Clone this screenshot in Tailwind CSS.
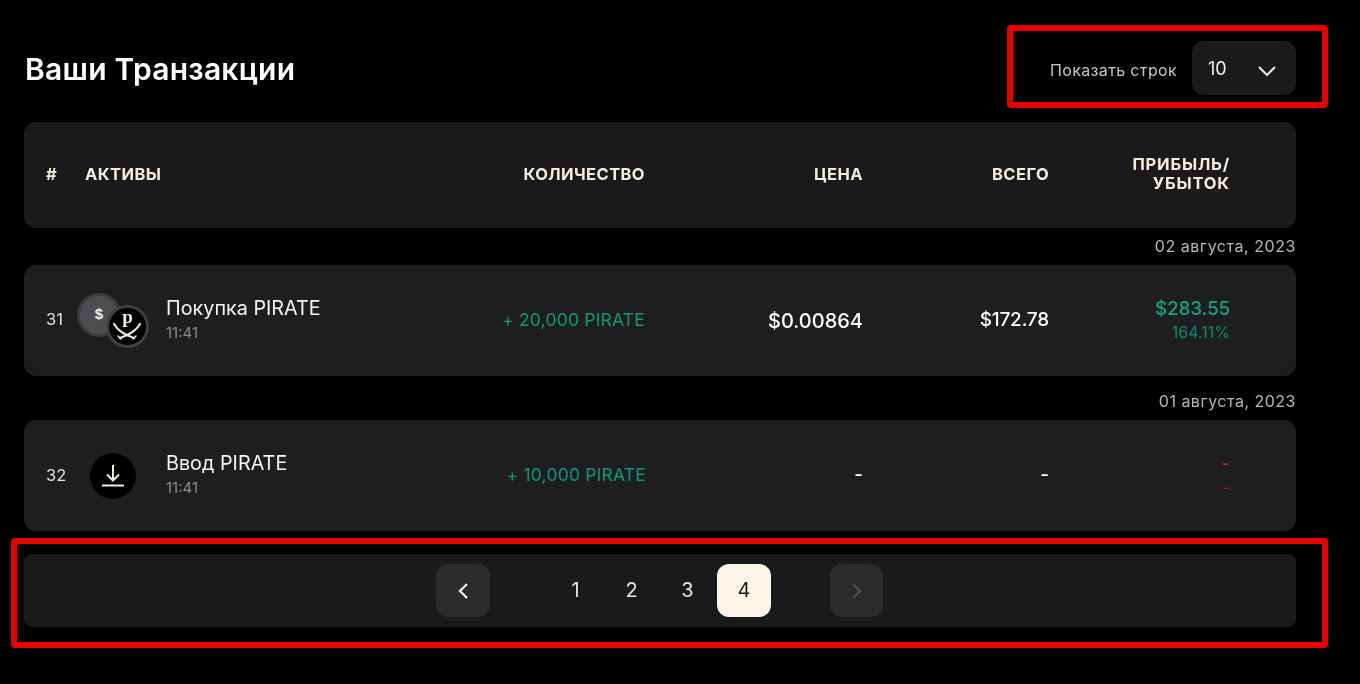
<!doctype html>
<html lang="ru"><head><meta charset="utf-8">
<script src="https://cdn.jsdelivr.net/npm/@tailwindcss/browser@4"></script>
</head>
<body class="bg-black font-['Inter',sans-serif] text-[#fdf6ea]">
<div class="relative w-[1360px] h-[684px] overflow-hidden pl-6 pr-16 blur-[0.35px]">
  <header class="flex items-center justify-between h-[122px] pt-[41px] pb-[27px]">
    <h1 class="text-[30px] font-semibold tracking-[0.25px] text-white mt-[3px] ml-px">Ваши Транзакции</h1>
    <div class="flex items-center gap-[15px]">
      <span class="text-[16px] tracking-[0.35px] text-[#c9c6c1] mt-[3px]">Показать строк</span>
      <div class="flex items-center justify-between w-[104px] h-[54px] rounded-xl bg-[#1a1a1c] pl-4 pr-[19px]">
        <span class="text-[18px] text-[#f5f0e6]">10</span>
        <svg width="20" height="12" viewBox="0 0 20 12" fill="none" stroke="#f5efe3" stroke-width="2" class="mt-[6px]"><path d="M2 2l8 8 8-8"/></svg>
      </div>
    </div>
  </header>

  <div class="grid grid-cols-[39px_360px_200px_218px_186px_181px] items-center h-[106px] pl-[22px] rounded-xl bg-[#1a1a1c] text-[16.5px] tracking-[0.4px] font-bold text-[#f5ecdc]">
    <span class="-mt-[2px]">#</span><span class="-mt-[2px]">АКТИВЫ</span><span class="text-right -mt-[2px]">КОЛИЧЕСТВО</span><span class="text-right -mt-[2px]">ЦЕНА</span><span class="text-right -mt-[2px]">ВСЕГО</span><span class="text-right leading-[19px] tracking-[0.8px] -mt-[2px]">ПРИБЫЛЬ/<br>УБЫТОК</span>
  </div>

  <div class="h-[37px] flex items-center justify-end pb-px text-[16px] tracking-[0.55px] text-[#b9b7b3]">02 августа, 2023</div>
  <div class="grid grid-cols-[39px_360px_200px_218px_186px_181px] items-center h-[111px] pl-[22px] rounded-xl bg-[#1e1e20]">
    <span class="text-[16.5px] text-[#e6e3dd] -mt-[2px]">31</span>
    <div class="flex items-center">
      <div class="relative w-[88px] h-[60px] -ml-[7px] shrink-0">
        <div class="absolute -left-px top-[2px] w-[44px] h-[44px] rounded-full bg-[#4e4e50] border-[3px] border-[#3c3c3e] flex items-center justify-center font-['Liberation_Sans',sans-serif] font-bold text-[15px] text-[#efefef]">$</div>
        <div class="absolute left-[28px] top-[14px] w-[43px] h-[43px] rounded-full bg-black border-[3px] border-[#3f3f41] flex items-start justify-center overflow-hidden">
          <span class="font-['Liberation_Serif',serif] font-bold text-[19px] leading-[20px] text-[#f2ecdf] -mt-[1px]">p</span>
          <svg class="absolute left-[4px] top-[14px]" width="28" height="20" viewBox="0 0 28 20" fill="none" stroke="#efe9dc" stroke-width="2.2" stroke-linecap="round"><path d="M1 2c4 7 11 11 20 14"/><path d="M27 2c-4 7-11 11-20 14"/><path d="M5 14l3 3M23 14l-3 3" stroke-width="1.6"/></svg>
        </div>
      </div>
      <div class="flex flex-col">
        <span class="text-[19.8px] leading-[24px] text-[#f7f4ee]">Покупка PIRATE</span>
        <span class="text-[15px] leading-[25px] text-[#8b8b8b]">11:41</span>
      </div>
    </div>
    <span class="text-right text-[17.5px] tracking-[0.2px] text-[#0f9a72]">+ 20,000 PIRATE</span>
    <span class="text-right text-[20px] font-medium text-white">$0.00864</span>
    <span class="text-right text-[19px] tracking-[-0.2px] font-medium text-white">$172.78</span>
    <div class="flex flex-col items-end -mt-[2px]">
      <span class="text-[19px] tracking-[-0.2px] leading-[24px] font-medium text-[#0fa77a]">$283.55</span>
      <span class="text-[16px] leading-[22px] text-[#0f8a66]">164.11%</span>
    </div>
  </div>

  <div class="h-[44px] flex items-center justify-end pt-[6px] text-[16px] tracking-[0.5px] text-[#b9b7b3]">01 августа, 2023</div>
  <div class="grid grid-cols-[39px_360px_200px_218px_186px_181px] items-center h-[111px] pl-[22px] rounded-xl bg-[#1e1e20]">
    <span class="text-[16.5px] text-[#e6e3dd]">32</span>
    <div class="flex items-center">
      <div class="w-[81px] flex shrink-0 pl-[5px]">
        <div class="w-[46px] h-[46px] rounded-full bg-black flex items-center justify-center">
          <svg width="24" height="24" viewBox="0 0 24 24" fill="none" stroke="#f5ecdc" stroke-width="2"><path d="M12 1v15M6 10.500l6 6 6-6"/><path d="M1 21.500h22"/></svg>
        </div>
      </div>
      <div class="flex flex-col">
        <span class="text-[19.8px] leading-[24px] text-[#f7f4ee]">Ввод PIRATE</span>
        <span class="text-[15px] leading-[25px] text-[#8b8b8b]">11:41</span>
      </div>
    </div>
    <span class="text-right text-[17.5px] tracking-[0.2px] text-[#0f9a72] -mr-px">+ 10,000 PIRATE</span>
    <span class="text-right text-[19px] font-medium text-white">-</span>
    <span class="text-right text-[19px] font-medium text-white">-</span>
    <div class="flex flex-col items-end -mt-[2px]">
      <span class="text-[19px] leading-[24px] font-medium text-[#b01f35]">-</span>
      <span class="text-[16px] leading-[22px] text-[#8f1f30]">-</span>
    </div>
  </div>

  <nav class="relative mt-[23px] h-[73px] rounded-lg bg-[#1a1a1c] text-[20px] text-[#e8e6e1]">
    <div class="absolute left-[412px] top-[10px] flex items-center h-[53px]">
      <button class="w-[54px] h-[53px] rounded-xl bg-[#2b2b2d] flex items-center justify-center"><svg width="14" height="20" viewBox="0 0 14 20" fill="none" stroke="#fff" stroke-width="2.200"><path d="M11 3l-7 7 7 7"/></svg></button>
      <div class="flex items-center ml-[59px] gap-[3px] -mt-[1px]">
        <span class="w-[53px] text-center">1</span>
        <span class="w-[53px] text-center">2</span>
        <span class="w-[53px] text-center">3</span>
        <span class="w-[54px] h-[53px] mt-px rounded-xl bg-[#fdf5e8] text-[#1a1a1c] flex items-center justify-center pb-px">4</span>
      </div>
      <button class="ml-[59px] w-[53px] h-[53px] rounded-xl bg-[#2b2b2d] flex items-center justify-center"><svg width="14" height="20" viewBox="0 0 14 20" fill="none" stroke="#4d4d4f" stroke-width="2.200"><path d="M3 3l7 7-7 7"/></svg></button>
    </div>
  </nav>

  <div class="absolute left-[1007px] top-[25px] w-[321px] h-[83px] border-[6px] border-[#e60000] rounded-sm"></div>
  <div class="absolute left-[11px] top-[538px] w-[1317px] h-[110px] border-[6px] border-[#e60000] rounded-sm"></div>
</div>
</body></html>
